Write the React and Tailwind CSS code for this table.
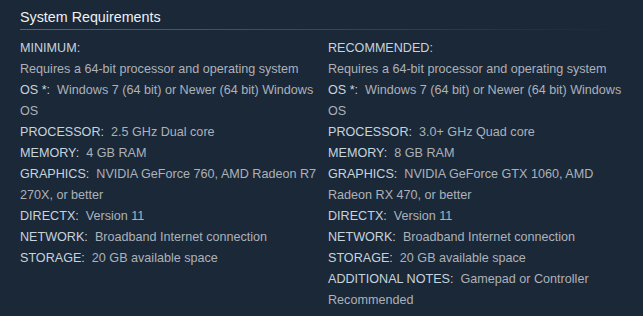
const MINIMUM = [
  { text: "Requires a 64-bit processor and operating system" },
  { label: "OS *:", text: "Windows 7 (64 bit) or Newer (64 bit) Windows OS" },
  { label: "PROCESSOR:", text: "2.5 GHz Dual core" },
  { label: "MEMORY:", text: "4 GB RAM" },
  { label: "GRAPHICS:", text: "NVIDIA GeForce 760, AMD Radeon R7 270X, or better" },
  { label: "DIRECTX:", text: "Version 11" },
  { label: "NETWORK:", text: "Broadband Internet connection" },
  { label: "STORAGE:", text: "20 GB available space" },
];

const RECOMMENDED = [
  { text: "Requires a 64-bit processor and operating system" },
  { label: "OS *:", text: "Windows 7 (64 bit) or Newer (64 bit) Windows OS" },
  { label: "PROCESSOR:", text: "3.0+ GHz Quad core" },
  { label: "MEMORY:", text: "8 GB RAM" },
  { label: "GRAPHICS:", text: "NVIDIA GeForce GTX 1060, AMD Radeon RX 470, or better" },
  { label: "DIRECTX:", text: "Version 11" },
  { label: "NETWORK:", text: "Broadband Internet connection" },
  { label: "STORAGE:", text: "20 GB available space" },
  { label: "ADDITIONAL NOTES:", text: "Gamepad or Controller Recommended" },
];

function ReqColumn({ title, items }) {
  return (
    <div>
      <strong className="block font-normal text-[#c6d4df]">{title}</strong>
      <ul>
        {items.map((it, i) => (
          <li key={i}>
            {it.label && <strong className="font-normal text-[#c6d4df] mr-[7px]">{it.label}</strong>}
            {it.text}
          </li>
        ))}
      </ul>
    </div>
  );
}

export default function App() {
  return (
    <div className="w-[643px] h-[316px] bg-[#1b2838] overflow-hidden px-5 pt-[6px]"
      style={{ fontFamily: '"Liberation Sans", Arial, sans-serif' }}>
      <h2 className="text-[14.3px] leading-[22px] text-[#eef2f5] pb-[1px]">System Requirements</h2>
      <div className="h-px w-[600px] bg-gradient-to-r from-[#4a6b86] via-[#2f4a61] to-transparent" />
      <div className="grid grid-cols-[300px_300px] gap-x-2 pt-[8px] text-[12.6px] leading-[21px] text-[#acb2b8]">
        <ReqColumn title="MINIMUM:" items={MINIMUM} />
        <ReqColumn title="RECOMMENDED:" items={RECOMMENDED} />
      </div>
    </div>
  );
}
